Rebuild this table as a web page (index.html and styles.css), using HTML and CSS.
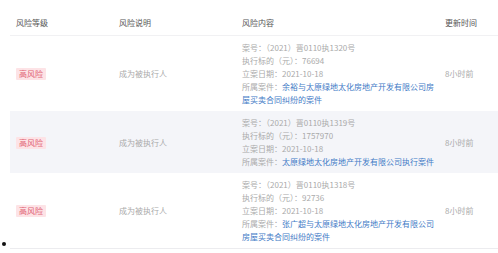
FILE: index.html
```html
<!DOCTYPE html>
<html lang="zh">
<head>
<meta charset="utf-8">
<link rel="stylesheet" href="styles.css">
</head>
<body>
<div class="item">
  <span class="dot"></span>
  <div class="table">
    <div class="row head">
      <div class="cell">风险等级</div>
      <div class="cell">风险说明</div>
      <div class="cell">风险内容</div>
      <div class="cell">更新时间</div>
    </div>
    <div class="row">
      <div class="cell"><span class="badge">高风险</span></div>
      <div class="cell muted">成为被执行人</div>
      <div class="cell content">
        <div>案号：（2021）晋0110执1320号</div>
        <div>执行标的（元）：76694</div>
        <div>立案日期：2021-10-18</div>
        <div>所属案件：<span class="link">余裕与太原绿地太化房地产开发有限公司房屋买卖合同纠纷的案件</span></div>
      </div>
      <div class="cell muted">8小时前</div>
    </div>
    <div class="row alt">
      <div class="cell"><span class="badge">高风险</span></div>
      <div class="cell muted">成为被执行人</div>
      <div class="cell content">
        <div>案号：（2021）晋0110执1319号</div>
        <div>执行标的（元）：1757970</div>
        <div>立案日期：2021-10-18</div>
        <div>所属案件：<span class="link">太原绿地太化房地产开发有限公司执行案件</span></div>
      </div>
      <div class="cell muted">8小时前</div>
    </div>
    <div class="row last">
      <div class="cell"><span class="badge">高风险</span></div>
      <div class="cell muted">成为被执行人</div>
      <div class="cell content">
        <div>案号：（2021）晋0110执1318号</div>
        <div>执行标的（元）：92736</div>
        <div>立案日期：2021-10-18</div>
        <div>所属案件：<span class="link">张广超与太原绿地太化房地产开发有限公司房屋买卖合同纠纷的案件</span></div>
      </div>
      <div class="cell muted">8小时前</div>
    </div>
  </div>
</div>
</body>
</html>
```
FILE: styles.css
```css
html, body {
  margin: 0;
  padding: 0;
  background: #fff;
}
body {
  font-family: "Noto Sans CJK SC", "Noto Sans", sans-serif;
  font-size: 8px;
  color: #666;
  width: 498px;
  height: 253px;
  overflow: hidden;
}
.item {
  display: flex;
  align-items: flex-end;
  padding-top: 10px;
}
.dot {
  width: 4px;
  height: 4px;
  border-radius: 50%;
  background: #111;
  margin: 0 4px 3px 2px;
  flex: none;
}
.table {
  width: 488px;
  flex: none;
}
.row {
  display: grid;
  grid-template-columns: 103px 123px 203px 1fr;
  align-items: center;
  padding: 5px 0;
}
.row.head {
  height: 26px;
  padding: 0;
  border-bottom: 1px solid #f1f1f3;
  color: #555;
  box-sizing: border-box;
}
.row.alt {
  background: #f4f5f9;
}
.row.last {
  border-bottom: 1px solid #ececef;
}
.cell {
  padding: 0 6px;
  line-height: 13px;
}
.cell.content {
  padding-right: 0;
  color: #aaa;
}
.content .link {
  color: #3f7bc6;
}
.muted {
  color: #aaa;
}
.badge {
  display: inline-block;
  background: #fde3e6;
  color: #df6274;
  padding: 0 3px;
  line-height: 12px;
  border-radius: 1px;
}
```
